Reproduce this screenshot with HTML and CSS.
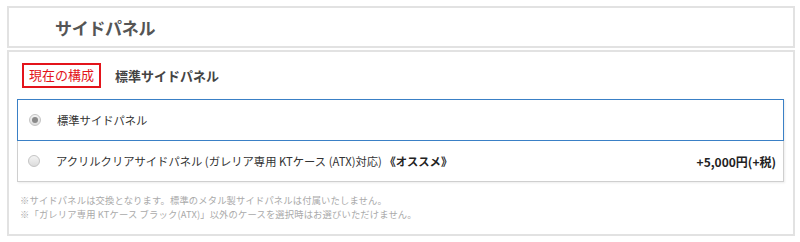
FILE: index.html
```html
<!DOCTYPE html>
<html lang="ja">
<head>
<meta charset="utf-8">
<title>サイドパネル</title>
<link rel="stylesheet" href="styles.css">
</head>
<body>
<section class="panel">
  <header class="panel-head">
    <h2 class="panel-title">サイドパネル</h2>
  </header>
  <div class="panel-body">
    <div class="current">
      <span class="badge">現在の構成</span>
      <span class="current-name">標準サイドパネル</span>
    </div>
    <ul class="options">
      <li class="option selected">
        <span class="radio checked"></span>
        <span class="option-label">標準サイドパネル</span>
      </li>
      <li class="option">
        <span class="radio"></span>
        <span class="option-label">アクリルクリアサイドパネル (ガレリア専用 KTケース (ATX)対応) <b class="recommend">《オススメ》</b></span>
        <span class="price">+5,000円(+税)</span>
      </li>
    </ul>
    <p class="notes">※サイドパネルは交換となります。標準のメタル製サイドパネルは付属いたしません。<br>※「ガレリア専用 KTケース ブラック(ATX)」以外のケースを選択時はお選びいただけません。</p>
  </div>
</section>
</body>
</html>
```

FILE: styles.css
```css
html, body {
  margin: 0;
  padding: 0;
  background: #fff;
}
body {
  font-family: "Noto Sans CJK JP", "Noto Sans", sans-serif;
  color: #333;
}
.panel {
  width: 788px;
  margin: 6px 0 0 7px;
  display: flex;
  flex-direction: column;
  gap: 2px;
}
.panel-head {
  box-sizing: border-box;
  height: 42px;
  border: 2px solid #e2e2e2;
  display: flex;
  align-items: center;
  padding-left: 46px;
}
.panel-title {
  margin: 0;
  font-size: 17px;
  font-weight: bold;
  color: #555;
  line-height: 1;
  letter-spacing: -0.3px;
}
.panel-body {
  box-sizing: border-box;
  height: 186px;
  border: 2px solid #e2e2e2;
  padding: 11px 9px 0 8px;
}
.current {
  display: flex;
  align-items: center;
  gap: 14px;
  margin-left: 5px;
  height: 25px;
}
.badge {
  box-sizing: border-box;
  height: 25px;
  border: 2px solid #e3141b;
  color: #e3141b;
  font-size: 13px;
  line-height: 20px;
  padding: 0 5px;
}
.current-name {
  font-size: 13px;
  font-weight: bold;
  color: #444;
}
.options {
  list-style: none;
  margin: 11px 0 0;
  padding: 0;
  border: 1px solid #cfcfcf;
  box-shadow: 1px 1px 2px rgba(0,0,0,0.08);
}
.option {
  display: flex;
  align-items: center;
  height: 40px;
  padding: 0 7px 0 10px;
  font-size: 11.3px;
  color: #333;
}
.option.selected {
  border: 1px solid #3a80c6;
  margin: -1px -1px 0;
  padding: 0 8px 0 11px;
}
.radio {
  box-sizing: border-box;
  width: 12px;
  height: 12px;
  border-radius: 50%;
  border: 1px solid #c4c4c4;
  background: linear-gradient(#f4f4f4, #dcdcdc);
  margin-right: 16px;
  display: flex;
  align-items: center;
  justify-content: center;
  flex: none;
}
.radio.checked::after {
  content: "";
  width: 6px;
  height: 6px;
  border-radius: 50%;
  background: #8a8a8a;
}
.option-label {
  flex: 1;
}
.recommend {
  font-weight: bold;
  color: #222;
}
.price {
  font-weight: bold;
  color: #222;
  font-size: 12px;
}
.notes {
  margin: 11px 0 0 3px;
  font-size: 9.3px;
  letter-spacing: 0.15px;
  line-height: 14px;
  color: #aaa;
}
```
